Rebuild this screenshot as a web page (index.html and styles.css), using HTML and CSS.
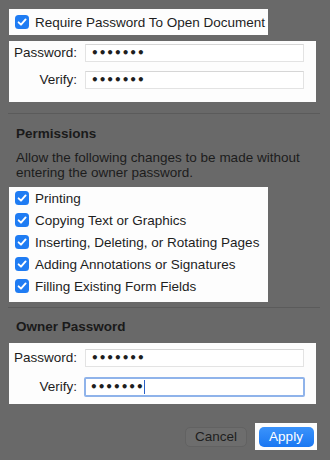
FILE: index.html
```html
<!DOCTYPE html>
<html>
<head>
<meta charset="utf-8">
<link rel="stylesheet" href="styles.css">
</head>
<body>
<div class="sheet">
  <div class="hl req">
    <span class="cb"><svg viewBox="0 0 14 14" width="14" height="14"><path d="M3.6 7.3 L6 9.7 L10.6 4.4" fill="none" stroke="#fff" stroke-width="1.9" stroke-linecap="round" stroke-linejoin="round"/></svg></span>
    <span class="lbl">Require Password To Open Document</span>
  </div>
  <div class="hl fields first">
    <div class="frow"><span class="flabel">Password:</span><span class="input"><span class="dots">•••••••</span></span></div>
    <div class="frow"><span class="flabel">Verify:</span><span class="input"><span class="dots">•••••••</span></span></div>
  </div>

  <div class="sep"></div>
  <div class="head">Permissions</div>
  <div class="desc">Allow the following changes to be made without entering the owner password.</div>
  <div class="hl perms">
    <div class="prow"><span class="cb"><svg viewBox="0 0 14 14" width="14" height="14"><path d="M3.6 7.3 L6 9.7 L10.6 4.4" fill="none" stroke="#fff" stroke-width="1.9" stroke-linecap="round" stroke-linejoin="round"/></svg></span><span class="lbl">Printing</span></div>
    <div class="prow"><span class="cb"><svg viewBox="0 0 14 14" width="14" height="14"><path d="M3.6 7.3 L6 9.7 L10.6 4.4" fill="none" stroke="#fff" stroke-width="1.9" stroke-linecap="round" stroke-linejoin="round"/></svg></span><span class="lbl">Copying Text or Graphics</span></div>
    <div class="prow"><span class="cb"><svg viewBox="0 0 14 14" width="14" height="14"><path d="M3.6 7.3 L6 9.7 L10.6 4.4" fill="none" stroke="#fff" stroke-width="1.9" stroke-linecap="round" stroke-linejoin="round"/></svg></span><span class="lbl">Inserting, Deleting, or Rotating Pages</span></div>
    <div class="prow"><span class="cb"><svg viewBox="0 0 14 14" width="14" height="14"><path d="M3.6 7.3 L6 9.7 L10.6 4.4" fill="none" stroke="#fff" stroke-width="1.9" stroke-linecap="round" stroke-linejoin="round"/></svg></span><span class="lbl">Adding Annotations or Signatures</span></div>
    <div class="prow"><span class="cb"><svg viewBox="0 0 14 14" width="14" height="14"><path d="M3.6 7.3 L6 9.7 L10.6 4.4" fill="none" stroke="#fff" stroke-width="1.9" stroke-linecap="round" stroke-linejoin="round"/></svg></span><span class="lbl">Filling Existing Form Fields</span></div>
  </div>

  <div class="sep sep2"></div>
  <div class="head head2">Owner Password</div>
  <div class="hl fields owner">
    <div class="frow"><span class="flabel">Password:</span><span class="input"><span class="dots">•••••••</span></span></div>
    <div class="frow"><span class="flabel">Verify:</span><span class="input focus"><span class="dots">•••••••</span><span class="caret"></span></span></div>
  </div>

  <div class="buttons">
    <span class="btn cancel">Cancel</span>
    <span class="applywrap"><span class="btn apply">Apply</span></span>
  </div>
</div>
</body>
</html>
```

FILE: styles.css
```css
html, body {
  margin: 0;
  padding: 0;
}
body {
  background: #696969;
  width: 330px;
  height: 460px;
  overflow: hidden;
  font-family: "Liberation Sans", Arial, sans-serif;
  font-size: 13.5px;
  color: #1c1c1c;
}
.sheet {
  padding: 9px 10px 0 9px;
}
.hl {
  background: #fdfdfd;
  box-sizing: border-box;
}
.req {
  width: 259px;
  height: 26px;
  display: flex;
  align-items: center;
  padding-left: 6px;
}
.cb {
  width: 14px;
  height: 14px;
  border-radius: 3.5px;
  background: #1f7cf3;
  display: inline-flex;
  flex: none;
}
.cb svg { display: block; }
.lbl {
  margin-left: 6px;
  white-space: nowrap;
  color: #1e1e1e;
}
.fields {
  width: 307px;
  height: 61px;
  display: flex;
  flex-direction: column;
}
.first {
  margin-top: 6px;
  padding-top: 2px;
  gap: 8px;
}
.frow {
  display: flex;
  align-items: center;
  height: 19px;
}
.flabel {
  width: 68px;
  text-align: right;
  flex: none;
}
.input {
  margin-left: 8px;
  width: 219px;
  height: 18px;
  box-sizing: border-box;
  border: 1px solid #e3e3e3;
  border-top-color: #d6d6d6;
  background: #fff;
  display: flex;
  align-items: center;
  padding-left: 5px;
}
.dots {
  font-family: "DejaVu Sans", sans-serif;
  font-size: 12px;
  letter-spacing: 0;
  color: #1e1e1e;
  line-height: 1;
  font-weight: bold;
}
.focus {
  margin-left: 7px;
  width: 221px;
  height: 20px;
  border: 2px solid #8fb3ea;
  border-radius: 2px;
  padding-left: 4px;
}
.caret {
  width: 1px;
  height: 14px;
  background: #2a62c9;
  margin-left: 0;
}
.sep {
  margin-top: 11px;
  margin-left: -1px;
  height: 1px;
  width: 312px;
  background: #5b5b5b;
}
.head {
  margin-top: 12px;
  margin-left: 7px;
  font-weight: bold;
  line-height: 16px;
  color: #1a1a1a;
}
.desc {
  margin-top: 8px;
  margin-left: 7px;
  line-height: 15px;
  width: 305px;
  color: #1c1c1c;
}
.perms {
  margin-top: 7px;
  width: 259px;
  height: 115px;
  padding: 0 0 0 6px;
}
.prow {
  display: flex;
  align-items: center;
  height: 22px;
}
.sep2 {
  margin-top: 5px;
}
.head2 {
  margin-top: 11px;
}
.owner {
  margin-top: 8px;
  padding-top: 5px;
  gap: 10px;
}
.buttons {
  margin-top: 19px;
  display: flex;
  justify-content: flex-end;
  align-items: center;
  padding-right: 3px;
}
.btn {
  display: inline-flex;
  align-items: center;
  justify-content: center;
  height: 20px;
  border-radius: 5px;
  box-sizing: border-box;
}
.cancel {
  width: 62px;
  background: #6d6d6d;
  border: 1px solid #626262;
  color: #1e1e1e;
  margin-right: 8px;
}
.applywrap {
  background: #fdfdfd;
  width: 62px;
  height: 27px;
  display: inline-flex;
  align-items: center;
  justify-content: center;
}
.apply {
  width: 55px;
  background: linear-gradient(#3b93fb, #1a77f2);
  color: #fff;
}
```
